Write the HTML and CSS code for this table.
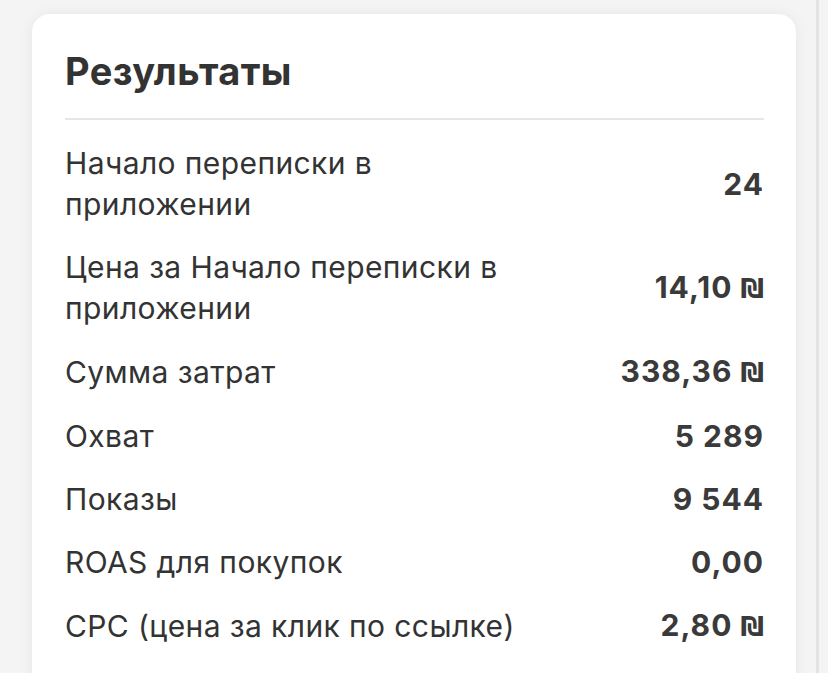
FILE: index.html
```html
<!DOCTYPE html>
<html lang="ru">
<head>
<meta charset="utf-8">
<link rel="stylesheet" href="styles.css">
</head>
<body>
<div class="page">
  <main class="main">
    <section class="card">
      <h2 class="title">Результаты</h2>
      <div class="rows">
        <div class="row"><span class="label">Начало переписки в приложении</span><span class="value">24</span></div>
        <div class="row"><span class="label">Цена за Начало переписки в приложении</span><span class="value">14,10 <span class="cur">₪</span></span></div>
        <div class="row"><span class="label">Сумма затрат</span><span class="value">338,36 <span class="cur">₪</span></span></div>
        <div class="row"><span class="label">Охват</span><span class="value">5 289</span></div>
        <div class="row"><span class="label">Показы</span><span class="value">9 544</span></div>
        <div class="row"><span class="label">ROAS для покупок</span><span class="value">0,00</span></div>
        <div class="row"><span class="label">CPC (цена за клик по ссылке)</span><span class="value">2,80 <span class="cur">₪</span></span></div>
      </div>
    </section>
  </main>
  <div class="edge"></div>
</div>
</body>
</html>
```
FILE: styles.css
```css
* { box-sizing: border-box; }
html, body { margin: 0; padding: 0; height: 100%; }
body {
  background: #f4f4f4;
  font-family: Inter, "Noto Sans", "DejaVu Sans", sans-serif;
  color: #333;
  overflow: hidden;
}
.page {
  display: flex;
  height: 673px;
}
.main {
  width: 816px;
  padding: 14px 20px 0 32px;
}
.edge {
  width: 3px;
  background: #e3e3e3;
}
.card {
  width: 764px;
  height: 700px;
  background: #fff;
  border-radius: 18px;
  box-shadow: 0 0 14px rgba(0,0,0,0.06);
  padding: 34px 32px 0 33px;
}
.title {
  margin: 0;
  font-size: 38px;
  font-weight: 700;
  line-height: 46px;
  letter-spacing: 0.4px;
  color: #333;
  padding-bottom: 24px;
  border-bottom: 2px solid #e6e6e6;
}
.rows {
  display: flex;
  flex-direction: column;
  padding-top: 12px;
}
.row {
  display: flex;
  align-items: center;
  justify-content: space-between;
  gap: 40px;
  padding: 11px 0;
}
.label {
  font-size: 30px;
  line-height: 41px;
  letter-spacing: 0.4px;
  max-width: 470px;
  color: #333;
}
.value {
  font-size: 30px;
  font-weight: 700;
  line-height: 41px;
  letter-spacing: 1px;
  white-space: nowrap;
  color: #3a3a3a;
}
.cur {
  font-family: "DejaVu Sans", sans-serif;
  font-size: 26px;
  letter-spacing: 0;
}
```
